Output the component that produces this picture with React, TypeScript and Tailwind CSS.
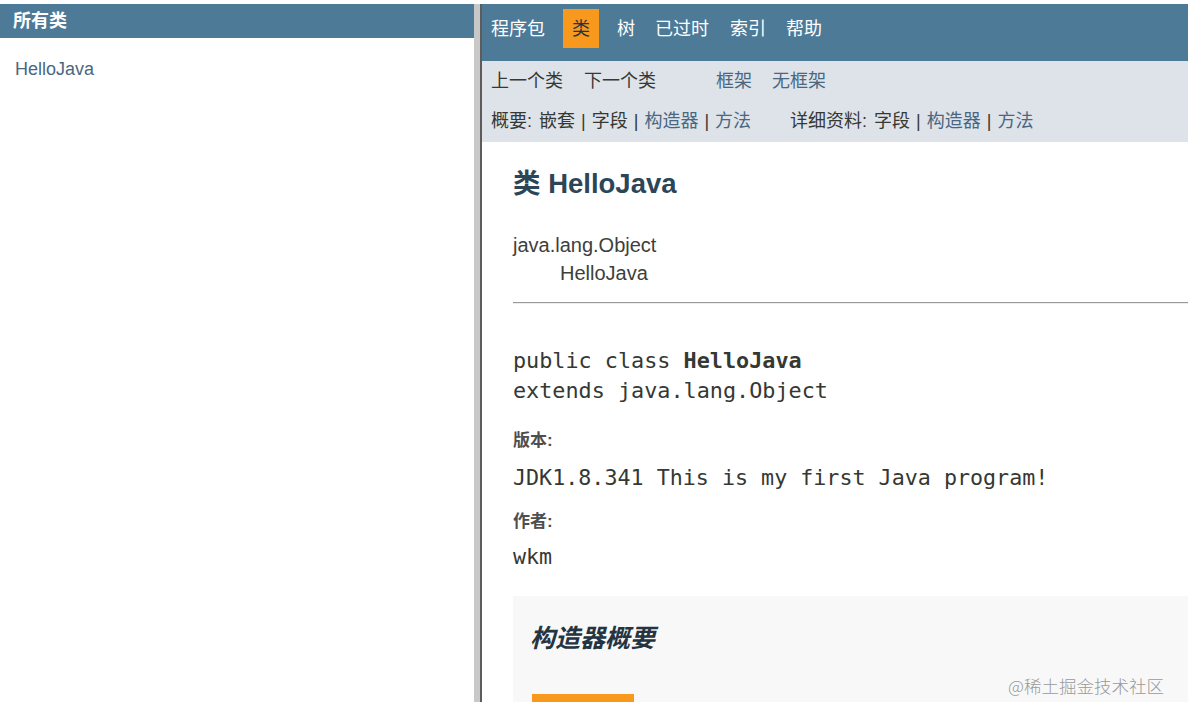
import React from "react";

const sans = "font-['Liberation_Sans','Noto_Sans_CJK_SC',sans-serif]";
const mono = "font-['DejaVu_Sans_Mono','Noto_Sans_CJK_SC',monospace]";

function Sep() {
  return <span className="mx-[1px]"> | </span>;
}

export default function App() {
  return (
    <div className={`w-[1188px] h-[716px] bg-white overflow-hidden pt-[4px] ${sans}`}>
      <div className="flex h-[698px]">
        {/* Left frame */}
        <div className="w-[474px] shrink-0 flex flex-col bg-white">
          <div className="h-[34px] shrink-0 bg-[#4D7A97] text-white font-bold text-[18px] pl-[13px] flex items-center leading-none">
            所有类
          </div>
          <div className="pl-[15px] pt-[19px] text-[18px] leading-[24px] text-[#4A6782]">HelloJava</div>
        </div>
        <div className="w-[6px] shrink-0 bg-[#c8c8c8]" />
        <div className="w-[2px] shrink-0 bg-[#5c5c5c]" />
        {/* Right frame */}
        <div className="flex-1 min-w-0 flex flex-col relative overflow-hidden bg-white">
          <div className="h-[57px] shrink-0 bg-[#4D7A97] flex items-start pt-[5px] text-[18px] text-white leading-none">
            <span className="ml-[9px] h-[39px] flex items-center">程序包</span>
            <span className="ml-[18px] h-[39px] w-[36px] bg-[#F8981D] text-[#253441] flex items-center justify-center">类</span>
            <span className="ml-[18px] h-[39px] flex items-center">树</span>
            <span className="ml-[20px] h-[39px] flex items-center">已过时</span>
            <span className="ml-[21px] h-[39px] flex items-center">索引</span>
            <span className="ml-[20px] h-[39px] flex items-center">帮助</span>
          </div>
          <div className="h-[81px] shrink-0 bg-[#DEE3E9] text-[18px] text-[#353833] pl-[9px]">
            <div className="h-[40px] flex items-center leading-none">
              <span>上一个类</span>
              <span className="ml-[21px]">下一个类</span>
              <span className="ml-[60px] text-[#4A6782]">框架</span>
              <span className="ml-[20px] text-[#4A6782]">无框架</span>
            </div>
            <div className="h-[40px] flex items-center leading-none whitespace-pre">
              <span>概要:</span>
              <span className="ml-[7px]">嵌套</span>
              <Sep />
              <span>字段</span>
              <Sep />
              <span className="text-[#4A6782]">构造器</span>
              <Sep />
              <span className="text-[#4A6782]">方法</span>
              <span className="ml-[39px]">详细资料:</span>
              <span className="ml-[7px]">字段</span>
              <Sep />
              <span className="text-[#4A6782]">构造器</span>
              <Sep />
              <span className="text-[#4A6782]">方法</span>
            </div>
          </div>
          <div className="pl-[31px] flex flex-col shrink-0">
            <div className="mt-[26px] h-[32px] leading-[32px] text-[27.5px] font-bold text-[#2C4557]">类 HelloJava</div>
            <div className="mt-[31px] text-[20px] leading-[28px] text-[#3d403b]">java.lang.Object</div>
            <div className="pl-[47px] text-[20px] leading-[28px] text-[#3d403b]">HelloJava</div>
            <div className="mt-[15px] h-[2px] border-t border-t-[#9a9a9a] border-b border-b-[#ececec]" />
            <div className={`mt-[42px] ${mono} text-[21.8px] leading-[30px] text-[#353833]`}>
              <div>
                public class <span className="font-bold">HelloJava</span>
              </div>
              <div>extends java.lang.Object</div>
            </div>
            <div className="mt-[23px] text-[17px] leading-[24px] font-bold text-[#4E4E4E]">版本:</div>
            <div className={`mt-[11px] ${mono} text-[21.7px] leading-[28px] text-[#353833]`}>
              JDK1.8.341 This is my first Java program!
            </div>
            <div className="mt-[18px] text-[17px] leading-[24px] font-bold text-[#4E4E4E]">作者:</div>
            <div className={`mt-[9px] ${mono} text-[21.7px] leading-[28px] text-[#353833]`}>wkm</div>
            <div className="mt-[25px] h-[200px] shrink-0 bg-[#F8F8F8] pl-[17px] pt-[26px]">
              <div className="text-[25px] leading-[32px] font-bold italic text-[#253441]">构造器概要</div>
              <div className="mt-[40px] ml-[2px] w-[102px] h-[20px] bg-[#F8981D]" />
            </div>
          </div>
          <div className="absolute left-[526px] top-[670px] text-[17.5px] leading-[24px] text-[#9a9a9a] font-['Noto_Sans_CJK_SC',sans-serif] font-light">
            @稀土掘金技术社区
          </div>
        </div>
      </div>
    </div>
  );
}
